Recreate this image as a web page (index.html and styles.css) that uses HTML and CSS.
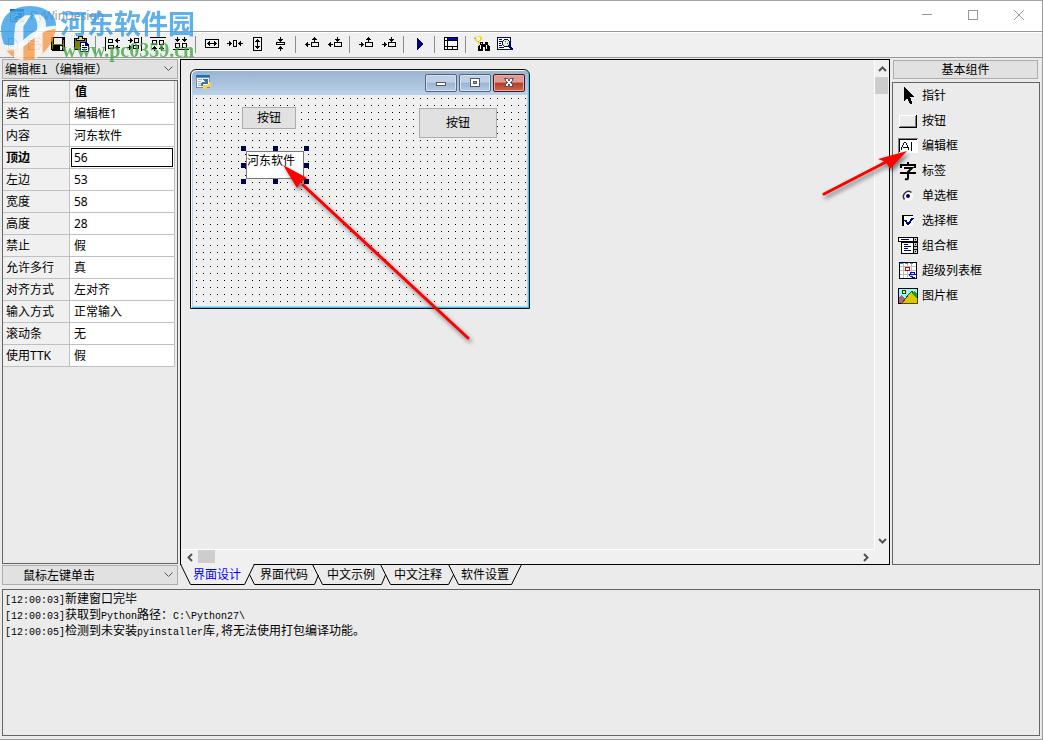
FILE: index.html
```html
<!DOCTYPE html>
<html lang="zh-CN">
<head>
<meta charset="utf-8">
<title>PyWinDesign</title>
<link rel="stylesheet" href="styles.css">
</head>
<body>
<svg width="0" height="0" class="defs" aria-hidden="true">
  <defs>
    <g id="arr-l"><path d="M0 2h1v1h-1zM1 1h1v3h-1zM2 0h1v5h-1zM3 2h2v1h-2z"/></g>
    <g id="arr-r"><path d="M4 2h1v1h-1zM3 1h1v3h-1zM2 0h1v5h-1zM0 2h2v1h-2z"/></g>
    <g id="arr-u"><path d="M2 0h1v1h-1zM1 1h3v1h-3zM0 2h5v1h-5zM2 3h1v2h-1z"/></g>
    <g id="arr-d"><path d="M2 4h1v1h-1zM1 3h3v1h-3zM0 2h5v1h-5zM2 0h1v2h-1z"/></g>
    <g id="app-icon">
      <path d="M0 0h14v13h-14z" fill="#8a8a8a"/><path d="M1 3h12v9h-12z" fill="#f7f7f7"/><path d="M0 0h14v2h-14z" fill="#0078d4"/>
      <path d="M2 4h4v1h-4zM2 6h3v1h-3zM2 8h3v1h-3zM2 10h3v1h-3z" fill="#b5b5b5"/>
      <path d="M7 5q0-1 2-1h2q1 0 1 1v3q0 1-1 1h-3q-1 0-1 2h-1q-1 0-1-2 0-2 2-2h3z" fill="#3a75a8"/>
      <path d="M13 7q2 0 2 2.500t-2 2.500h-2v1q0 1.500-2 1.500t-2-1.500v-2q0-1 1-1h3q2 0 2-2z" fill="#ffd43b"/>
    </g>
    <clipPath id="mark-disc"><path d="M3 78q8-44 62-58 60-8 90 22 18 20 12 46-8 54-56 86-30 16-66 2-30-18-36-50-8-20-6-48z"/></clipPath>
  </defs>
</svg>
<div class="app">
  <header class="titlebar">
    <svg class="icon" viewBox="-1 -1 17 17" aria-hidden="true"><use href="#app-icon"/></svg>
    <h1 class="title">PyWinDesign</h1>
    <div class="caption">
      <button aria-label="最小化"><svg viewBox="0 0 10 10"><path d="M0 4.500h10"/></svg></button>
      <button aria-label="最大化"><svg viewBox="0 0 10 10"><path d="M.5.5h9v9h-9z"/></svg></button>
      <button aria-label="关闭"><svg viewBox="0 0 10 10" shape-rendering="auto"><path d="M0 0l10 10M10 0l-10 10"/></svg></button>
    </div>
  </header>

  <nav class="toolbar" aria-label="工具栏">
    <button aria-label="新建" disabled><svg viewBox="0 0 16 16" fill="none" stroke="#999"><path d="M4.500 2.500h6l3 3v8h-9zM10.500 2.500v3h3M6 8.500h5M6 10.500h5"/></svg></button>
    <button aria-label="打开" disabled><svg viewBox="0 0 16 16" fill="none" stroke="#999"><path d="M1.500 13.500v-9h4l1 1h5v3M1.500 13.500l3-5h10l-3 5zM9.500 2.500h3l2 2"/></svg></button>
    <button aria-label="保存"><svg viewBox="0 0 16 16"><path d="M1 1h14v14h-13l-1-1z"/><path d="M2 2h1v11h-1zM13 4h1v10h-1zM3 8h10v1h-10z" fill="#808000"/><path d="M4 2h8v6h-8zM10 10h2v4h-2z" fill="#eee"/></svg></button>
    <button aria-label="粘贴"><svg viewBox="0 0 16 16"><path d="M1 2h13v12h-13z"/><path d="M2 3h11v10h-11z" fill="#808000"/><path d="M5 0h5v3h2v2h-9v-2h2z"/><path d="M6 1h3v2h2v1h-7v-1h2z" fill="#dddd66"/><path d="M7 6h6l3 3v7h-9z" fill="#000080"/><path d="M8 7h4v3h3v5h-7z" fill="#fff"/><path d="M9 9h2v1h-2zM9 11h5v1h-5zM9 13h5v1h-5z" fill="#000080"/></svg></button>
    <hr>
    <button aria-label="左对齐"><svg viewBox="0 0 16 16"><path d="M1 1h1v14h-1z"/><path d="M4.500 3.500h4v3h-4zM4.500 9.500h5v3h-5z" fill="none" stroke="#000"/><use href="#arr-l" x="11" y="2"/><use href="#arr-l" x="11" y="9"/></svg></button>
    <button aria-label="右对齐"><svg viewBox="0 0 16 16"><path d="M14 1h1v14h-1z"/><path d="M7.500 2.500h4v4h-4zM6.500 9.500h5v3h-5z" fill="none" stroke="#000"/><use href="#arr-r" x="1" y="2"/><use href="#arr-r" x="0" y="9"/></svg></button>
    <button aria-label="上对齐"><svg viewBox="0 0 16 16"><path d="M0 1h16v1h-16z"/><path d="M2.500 4.500h4v4h-4zM9.500 4.500h4v4h-4z" fill="none" stroke="#000"/><use href="#arr-u" x="2" y="10"/><use href="#arr-u" x="9" y="10"/></svg></button>
    <button aria-label="下对齐"><svg viewBox="0 0 16 16"><path d="M0 13h16v1h-16z"/><path d="M2.500 7.500h4v4h-4zM9.500 7.500h4v4h-4z" fill="none" stroke="#000"/><use href="#arr-d" x="2" y="1"/><use href="#arr-d" x="9" y="1"/></svg></button>
    <hr>
    <button aria-label="等宽"><svg viewBox="0 0 16 16"><path d="M1.500 3.500h13v8h-13z" fill="none" stroke="#000"/><path d="M5 7h6v1h-6z"/><use href="#arr-l" x="3" y="5"/><use href="#arr-r" x="8" y="5"/></svg></button>
    <button aria-label="水平居中"><svg viewBox="0 0 16 16"><path d="M6.500 4.500h3v6h-3z" fill="none" stroke="#000"/><use href="#arr-r" x="0" y="5"/><use href="#arr-l" x="11" y="5"/></svg></button>
    <button aria-label="等高"><svg viewBox="0 0 16 16"><path d="M3.500 1.500h8v13h-8z" fill="none" stroke="#000"/><path d="M7 5h1v6h-1z"/><use href="#arr-u" x="5" y="3"/><use href="#arr-d" x="5" y="8"/></svg></button>
    <button aria-label="垂直居中"><svg viewBox="0 0 16 16"><path d="M3.500 6.500h8v2h-8z" fill="none" stroke="#000"/><use href="#arr-d" x="5" y="1"/><use href="#arr-u" x="5" y="10"/></svg></button>
    <hr>
    <button aria-label="左上移动"><svg viewBox="0 0 16 16"><path d="M7.500 6.500h7v4h-7z" fill="none" stroke="#000"/><use href="#arr-l" x="1" y="6"/><use href="#arr-u" x="8" y="1"/></svg></button>
    <button aria-label="左下移动"><svg viewBox="0 0 16 16"><path d="M7.500 6.500h7v4h-7z" fill="none" stroke="#000"/><use href="#arr-l" x="1" y="6"/><use href="#arr-d" x="8" y="1"/></svg></button>
    <hr>
    <button aria-label="右上移动"><svg viewBox="0 0 16 16"><path d="M7.500 6.500h7v4h-7z" fill="none" stroke="#000"/><use href="#arr-r" x="1" y="6"/><use href="#arr-u" x="8" y="1"/></svg></button>
    <button aria-label="右下移动"><svg viewBox="0 0 16 16"><path d="M7.500 6.500h7v4h-7z" fill="none" stroke="#000"/><use href="#arr-r" x="1" y="6"/><use href="#arr-d" x="8" y="1"/></svg></button>
    <hr>
    <button aria-label="运行"><svg viewBox="0 0 16 16" fill="#000080"><path d="M5 2h1v1h1v1h1v1h1v1h1v1h1v2h-1v1h-1v1h-1v1h-1v1h-1v1h-1z"/></svg></button>
    <hr>
    <button aria-label="窗口"><svg viewBox="0 0 16 16"><path d="M1 1h14v13h-14z"/><path d="M2 2h2v2h-2zM2 5h2v5h-2zM2 11h2v2h-2zM5 5h9v5h-9zM5 11h4v2h-4zM10 11h4v2h-4z" fill="#fff"/><path d="M5 2h9v2h-9z" fill="#0000d0"/></svg></button>
    <hr>
    <button aria-label="查找"><svg viewBox="0 0 16 16"><path d="M0 1h3v1h-3zM1 3h2v2h-2zM4 0h3v1h1v3h-1v1h-2v-1h1v-3h-2zM4 6h2v2h-2z" fill="#f0e000"/><path d="M0 2h2v1h-2zM3 5h2v1h-2z" fill="#aaa"/><path d="M6 6h3v2h2v-2h3v3h1v1h1v5h-5v-4h-2v4h-5v-5h1v-1h1z"/><path d="M6 9h1v4h-1zM12 9h1v4h-1zM7 7h1v1h-1z" fill="#fff"/></svg></button>
    <button aria-label="预览"><svg viewBox="0 0 16 16"><path d="M0 1h14v13h-14z" fill="#000080"/><path d="M1 2h12v11h-12z" fill="#fff"/><path d="M2 3h3v1h-3zM2 5h3v1h-3zM2 7h2v1h-2zM2 9h3v1h-3zM2 11h5v1h-5z" fill="#000080"/><circle cx="9" cy="7" r="3.500" fill="#d9eee9" stroke="#111"/><path d="M12 10l4 4" stroke="#000080" stroke-width="2"/><path d="M8 5h1v1h-1zM10 7h1v1h-1z" fill="#555"/></svg></button>
  </nav>

  <main class="workspace">
    <section class="left">
      <div class="combo">
        <select aria-label="组件"><option>编辑框1（编辑框）</option></select>
        <svg class="chevron" viewBox="0 0 9 6"><path d="M.5.5l4 4 4-4"/></svg>
      </div>
      <div class="props">
        <table>
          <thead><tr><th scope="col">属性</th><th scope="col" class="strong">值</th></tr></thead>
          <tbody>
            <tr><th scope="row">类名</th><td>编辑框1</td></tr>
            <tr><th scope="row">内容</th><td>河东软件</td></tr>
            <tr class="active"><th scope="row"><label for="top-edge">顶边</label></th><td><input id="top-edge" value="56"></td></tr>
            <tr><th scope="row">左边</th><td>53</td></tr>
            <tr><th scope="row">宽度</th><td>58</td></tr>
            <tr><th scope="row">高度</th><td>28</td></tr>
            <tr><th scope="row">禁止</th><td>假</td></tr>
            <tr><th scope="row">允许多行</th><td>真</td></tr>
            <tr><th scope="row">对齐方式</th><td>左对齐</td></tr>
            <tr><th scope="row">输入方式</th><td>正常输入</td></tr>
            <tr><th scope="row">滚动条</th><td>无</td></tr>
            <tr><th scope="row">使用TTK</th><td>假</td></tr>
          </tbody>
        </table>
      </div>
      <div class="combo event">
        <select aria-label="事件"><option>鼠标左键单击</option></select>
        <svg class="chevron" viewBox="0 0 9 6"><path d="M.5.5l4 4 4-4"/></svg>
      </div>
    </section>

    <section class="center">
      <div class="designer">
        <div class="canvas">
          <div class="form">
            <div class="form-title">
              <svg class="icon" viewBox="0 0 16 16" aria-hidden="true"><use href="#app-icon"/></svg>
              <button aria-label="最小化窗体"><svg viewBox="0 0 12 10"><path d="M1.500 4.500h9v3h-9z"/></svg></button>
              <button aria-label="最大化窗体"><svg viewBox="0 0 12 10"><path d="M1.500.5h9v8h-9z"/><path d="M4.500 3.500h3v2h-3z" fill="#8fa9c9"/></svg></button>
              <button class="close" aria-label="关闭窗体"><svg viewBox="0 0 12 10"><path d="M1.500.5h3l1.500 2 1.500-2h3l-2.500 4 2.500 4h-3l-1.500-2-1.500 2h-3l2.500-4z"/></svg></button>
            </div>
            <div class="form-client">
              <button class="widget w1">按钮</button>
              <button class="widget w2">按钮</button>
              <input class="widget-edit" aria-label="编辑框1" value="河东软件">
              <svg class="handles" viewBox="0 0 68 38" aria-hidden="true"><path d="M0 0h5v5h-5zM32 0h5v5h-5zM63 0h5v5h-5zM0 17h5v5h-5zM63 17h5v5h-5zM0 33h5v5h-5zM32 33h5v5h-5zM63 33h5v5h-5z"/></svg>
            </div>
          </div>
          <svg class="pointer-main" viewBox="0 0 200 190" aria-hidden="true"><path d="M20 20l165 153" stroke="#f00" stroke-width="3" stroke-linecap="round"/><path d="M0 0l24 13-6 4-4 6z" fill="#f00"/></svg>
        </div>
        <div class="scroll vertical">
          <button aria-label="向上滚动"><svg viewBox="0 0 9 6"><path d="M1 5l3.500-3.500 3.500 3.500"/></svg></button>
          <div class="thumb"></div>
          <button class="end" aria-label="向下滚动"><svg viewBox="0 0 9 6"><path d="M1 1l3.500 3.500 3.500-3.500"/></svg></button>
        </div>
        <div class="scroll horizontal">
          <button aria-label="向左滚动"><svg class="side" viewBox="0 0 6 9"><path d="M5 1l-3.500 3.500 3.500 3.500"/></svg></button>
          <div class="thumb"></div>
          <button class="end" aria-label="向右滚动"><svg class="side" viewBox="0 0 6 9"><path d="M1 1l3.500 3.500-3.500 3.500"/></svg></button>
        </div>
      </div>
      <div class="tabs">
        <svg class="tab-lines" viewBox="0 0 342 21" aria-hidden="true">
          <path d="M1 0h73l-10 20h-53z" fill="#f0f0f0"/>
          <path d="M.5 0l10 20.500h54l10-20.500M69.500 10.500l5 10h60l4-9.500M132.500.5l10 20h59l4-9.500M200.500.5l10 20h58l5-9.500M268.500.5l10 20h53l10-20" fill="none" stroke="#000"/>
        </svg>
        <button class="on">界面设计</button>
        <button>界面代码</button>
        <button>中文示例</button>
        <button>中文注释</button>
        <button>软件设置</button>
      </div>
    </section>

    <aside class="right">
      <button class="group">基本组件</button>
      <div class="palette">
        <button><svg viewBox="0 0 20 20"><path d="M6 1v14l3-3 3 6h2v-2l-2-5h4z"/></svg>指针</button>
        <button><svg viewBox="0 0 20 20"><path d="M1 4h18v13h-18z"/><path d="M1 4h17v12h-17z" fill="#fff"/><path d="M2 5h16v11h-16z" fill="#808080"/><path d="M2 5h15v10h-15z" fill="#ebebeb"/></svg>按钮</button>
        <button><svg viewBox="0 0 20 20"><path d="M0 2h20v15h-20z" fill="#fff"/><path d="M0 2h20v1h-20zM0 2h1v15h-1z" fill="#808080"/><path d="M1 3h18v1h-18zM1 3h1v13h-1z"/><path d="M3.500 14v-2l3-6h1l3 6v2M5 11.500h5M13.500 6v9" fill="none" stroke="#000"/></svg>编辑框</button>
        <button><svg viewBox="0 0 20 20" class="smooth" fill="none" stroke="#000" stroke-width="2"><path d="M10 1v3M3 7v-3h14v3M6 7h8l-4 4v6q0 2-3 1M2 12h16"/></svg>标签</button>
        <button><svg viewBox="0 0 20 20" class="smooth"><circle cx="10" cy="10" r="5" fill="#fff"/><path d="M6.500 13.500a5 5 0 0 1 7-7" fill="none" stroke="#333" stroke-width="1.500"/><circle cx="10" cy="10" r="2" fill="#000080"/></svg>单选框</button>
        <button><svg viewBox="0 0 20 20"><path d="M4 4h11v1h-11zM4 4h2v11h-2z"/><path d="M6 5h9v10h-9z" fill="#fff"/><path d="M7 9l3 4 5-6" fill="none" stroke="#000080" stroke-width="2"/></svg>选择框</button>
        <button><svg viewBox="0 0 20 20"><path d="M0 1h20v17h-17v-12h-3z"/><path d="M1 2h14v3h-14zM4 7h11v10h-11z" fill="#fff"/><path d="M3 3h8v1h-8zM6 8h4v1h-4zM6 10h7v1h-7zM6 12h4v1h-4zM6 14h7v1h-7z" fill="#000080"/><path d="M16 2h3v3h-3zM16 7h3v3h-3zM16 11h3v2h-3zM16 14h3v3h-3z" fill="#ccc"/><path d="M17 3h1v1h-1zM17 8h1v1h-1zM17 15h1v1h-1z"/></svg>组合框</button>
        <button><svg viewBox="0 0 20 20"><path d="M1 1h18v17h-18z"/><path d="M2 2h16v15h-16z" fill="#fff"/><path d="M2 5h16v1h-16zM2 9h16v1h-16zM2 13h16v1h-16zM5 2h1v15h-1zM9 2h1v15h-1zM13 2h1v15h-1z" fill="#bbb"/><path d="M2 2h3v1h-3zM7 2h3v1h-3zM12 2h3v1h-3z" fill="#00a0e0"/><path d="M7.500 6.500h4v3h-4z" fill="#fff" stroke="#e00000"/><path d="M12 13.500h5q-.500-2.500-2.500-2.500t-2.500 2.500 2.500 2.500h2" fill="none" stroke="#0000e0"/></svg>超级列表框</button>
        <button><svg viewBox="0 0 20 20"><path d="M0 2h20v16h-20z"/><path d="M1 3h18v14h-18z" fill="#8ff"/><path d="M1 11l3-2 3 4v4h-6z" fill="#b06080"/><path d="M4 17l7-9 3-3 5 7v5z" fill="#d8c800" stroke="#554400"/><path d="M14 7l3-2 2 3v5z" fill="#20a020"/><circle cx="6" cy="6" r="2" fill="#ff0" stroke="#333"/></svg>图片框</button>
      </div>
      <svg class="pointer-palette" viewBox="0 0 90 50" aria-hidden="true"><path d="M3 45l62-32" stroke="#f00" stroke-width="3" stroke-linecap="round"/><path d="M86 2l-17 18-4-7-8-3z" fill="#f00"/></svg>
    </aside>
  </main>

  <section class="log" aria-label="日志">
    <p><span>[12:00:03]</span>新建窗口完毕</p>
    <p><span>[12:00:03]</span>获取到<span>Python</span>路径：<span>C:\Python27\</span></p>
    <p><span>[12:00:05]</span>检测到未安装<span>pyinstaller</span>库<span>,</span>将无法使用打包编译功能。</p>
  </section>

  <div class="watermark">
    <svg viewBox="0 0 180 190" aria-hidden="true">
      <g clip-path="url(#mark-disc)">
        <path d="M0 0h180v84q-50 0-90 36-40 30-90 10z" fill="#369ee8"/>
        <path d="M180 76q-50 10-86 46-36 34-90 14v60h176z" fill="#f59a4a"/>
        <path d="M6 136q34 6 62-14 50-50 106-44v8q-52 4-90 44-28 26-66 22z" fill="#fff" opacity=".9"/>
        <path d="M46 72q14-18 30-26h16l-22 34v100q-14 6-28-6v-66z" fill="#fff" opacity=".9"/>
        <path d="M100 44h20q22 12 18 40l-10 16v82h-24v-76q18-30-4-62z" fill="#fff" opacity=".9"/>
      </g>
    </svg>
    <div class="mark-text"><strong>河东软件园</strong><em>www.pc0359.cn</em></div>
  </div>
</div>
</body>
</html>
```

FILE: styles.css
```css
* { box-sizing: border-box; }
body { margin: 0; background: #ebebeb; color: #000; font: 12px/16px "Noto Sans", "Noto Sans CJK SC", sans-serif; }
button, input, select { font: inherit; color: inherit; margin: 0; padding: 0; border: 0; border-radius: 0; background: none; }
svg { display: block; shape-rendering: crispEdges; }
.defs { position: absolute; }

.app { position: relative; display: flex; flex-direction: column; height: 100vh; min-height: 480px; padding-bottom: 3px; border-right: 1px solid #999; border-bottom: 1px solid #999; overflow: hidden; }

.titlebar { flex: none; display: flex; align-items: center; height: 31px; padding-left: 9px; border-top: 1px solid #a6a6a6; background: #fff; }
.titlebar .icon { width: 17px; height: 17px; }
.title { flex: 1; margin: 0 0 0 4px; font-size: 12px; font-weight: 400; color: #999; }
.caption { display: flex; }
.caption button { width: 46px; height: 30px; padding-bottom: 2px; display: grid; place-items: center; }
.caption svg { width: 10px; height: 10px; fill: none; stroke: #999; }

.toolbar { flex: none; display: flex; align-items: center; height: 27px; border-top: 1px solid #999; border-bottom: 1px solid #999; background: #f0f0f0; box-shadow: inset 0 1px #fff; }
.toolbar button { width: 23px; height: 24px; padding-bottom: 2px; display: grid; place-items: center; }
.toolbar svg { width: 16px; height: 16px; }
.toolbar hr { width: 1px; height: 17px; margin: 0 4px 0 3px; border: 0; background: #8c8c8c; }

.workspace { flex: 1; min-height: 0; display: grid; grid-template-columns: 176px minmax(0, 1fr) 148px; gap: 2px; padding: 1px 2px 4px; }

.left { display: flex; flex-direction: column; gap: 1px; min-height: 0; }
.combo { flex: none; display: grid; align-items: center; height: 20px; border: 1px solid #adadad; background: #e1e1e1; }
.combo select, .combo svg { grid-area: 1 / 1; }
.combo select { appearance: none; width: 100%; height: 18px; padding-left: 2px; font-family: "Noto Sans CJK SC", sans-serif; }
.combo.event select { padding-left: 20px; }
.chevron { width: 9px; height: 6px; margin-right: 4px; justify-self: end; fill: none; stroke: #555; pointer-events: none; shape-rendering: auto; }

.props { flex: 1; min-height: 0; border: 1px solid #646464; overflow: hidden; }
.props table { width: calc(100% - 2px); border-spacing: 0; table-layout: fixed; }
.props th, .props td { height: 22px; padding: 0 0 0 4px; border-right: 1px solid #c0c0c0; border-bottom: 1px solid #c0c0c0; text-align: left; font-weight: 400; line-height: 16px; }
.props th { background: #f0f0f0; padding-left: 3px; }
.props th:first-child { width: 67px; }
.props .strong, .props .active th { font-weight: 700; }
.props .strong { padding-left: 5px; }
.props .active td { padding: 0 1px; }
.props input { display: block; width: 100%; height: 19px; padding-left: 2px; border: 1px solid #000; background: #fff; }
.props td { background: #fff; }

.center { display: flex; flex-direction: column; min-height: 0; }
.designer { flex: 1; min-height: 0; display: grid; grid-template: minmax(0, 1fr) 15px / minmax(0, 1fr) 15px; border: 1px solid #000; background: #f0f0f0; }
.canvas { position: relative; background: #ebebeb; }
.form { position: absolute; left: 9px; top: 9px; width: 340px; height: 240px; display: flex; flex-direction: column; padding: 0 2px 2px; border: 1px solid #111; border-radius: 6px 6px 0 0; background: linear-gradient(#9ab2ce, #b9d1ea 25px); box-shadow: inset 1px 1px #f4f9fd, inset -1px -1px #30c8f0; }
.form-title { display: flex; align-items: center; gap: 2px; height: 25px; padding: 0 2px 0 3px; }
.form-title .icon { width: 16px; height: 16px; margin-right: auto; }
.form-title button { width: 32px; height: 18px; display: grid; place-items: center; border: 1px solid #56667f; border-radius: 2px; background: linear-gradient(#bed0e5 45%, #9bb4d0 50%, #b3cae4); box-shadow: inset 0 0 0 1px #d3e1f0; }
.form-title button svg { width: 12px; height: 10px; fill: #fff; stroke: #535666; }
.form-title .close { border-color: #4b1620; background: linear-gradient(#dd9c8f 45%, #b83a24 50%, #cd6b4c); box-shadow: inset 0 0 0 1px #e5aea2; }
.form-client { position: relative; flex: 1; background: #f0f0f0 conic-gradient(from 270deg at 1px 1px, #000 90deg, transparent 0) 3px 3px / 7px 7px; }
.widget { position: absolute; border: 1px solid #adadad; background: #e1e1e1; }
.w1 { left: 49px; top: 12px; width: 54px; height: 22px; }
.w2 { left: 226px; top: 13px; width: 78px; height: 30px; }
.widget-edit { position: absolute; left: 53px; top: 56px; width: 58px; height: 28px; padding: 0 0 11px; border: 1px solid #7a7a7a; background: #fff; }
.handles { position: absolute; left: 48px; top: 51px; width: 68px; height: 38px; fill: #000050; pointer-events: none; }
.pointer-main, .pointer-palette { position: absolute; overflow: visible; fill: none; pointer-events: none; shape-rendering: auto; filter: drop-shadow(2px 3px 2px rgb(0 0 0 / 50%)); }
.pointer-main { left: 102px; top: 105px; width: 200px; height: 190px; }

.scroll { display: flex; }
.scroll button { flex: none; width: 17px; height: 14px; display: grid; place-items: center; }
.scroll svg { width: 9px; height: 6px; fill: none; stroke: #555; stroke-width: 2; shape-rendering: auto; }
.scroll .side { width: 6px; height: 9px; }
.scroll .thumb { background: #cdcdcd; }
.scroll .end { margin: auto 0 0; }
.vertical { flex-direction: column; border-left: 1px solid #fff; }
.vertical button { width: 14px; height: 17px; }
.vertical .thumb { height: 17px; width: 13px; }
.horizontal { border-top: 1px solid #fff; }
.horizontal .thumb { width: 17px; height: 13px; }
.horizontal .end { margin: 0 0 0 auto; }

.tabs { position: relative; flex: none; display: flex; gap: 19px; height: 20px; padding-left: 13px; }
.tab-lines { position: absolute; left: 0; top: -1px; width: 342px; height: 21px; shape-rendering: auto; }
.tabs button { position: relative; width: 48px; height: 20px; white-space: nowrap; }
.tabs .on { color: #00f; }

.right { position: relative; display: flex; flex-direction: column; gap: 3px; min-height: 0; padding: 1px 0 20px; }
.group { flex: none; height: 19px; margin: 0 2px 0 1px; border: 1px solid #adadad; background: #e1e1e1; }
.palette { flex: 1; min-height: 0; border: 1px solid #646464; padding-left: 5px; overflow: hidden; }
.palette button { display: flex; align-items: center; gap: 4px; width: 100%; height: 25px; }
.palette svg { width: 20px; height: 20px; }
.palette .smooth { shape-rendering: auto; }
.pointer-palette { right: 129px; top: 90px; width: 90px; height: 50px; }

.log { flex: none; height: 147px; margin: 0 2px; padding-left: 2px; border: 1px solid #646464; font-family: "Noto Sans CJK SC", sans-serif; overflow: auto; }
.log p { margin: 0; height: 16px; line-height: 16px; white-space: nowrap; }
.log span { font: 10px/16px "Liberation Mono", monospace; }

.watermark { position: absolute; left: 0; top: 0; display: flex; opacity: .8; pointer-events: none; }
.watermark svg { width: 60px; height: 63px; shape-rendering: auto; }
.mark-text { display: flex; flex-direction: column; padding-top: 6px; }
.mark-text strong { font: 700 27px/34px "Noto Sans CJK SC", sans-serif; color: #369ee8; }
.mark-text em { margin-left: 2px; font: 700 20px/20px "Liberation Serif", serif; color: #45a845; }
```
